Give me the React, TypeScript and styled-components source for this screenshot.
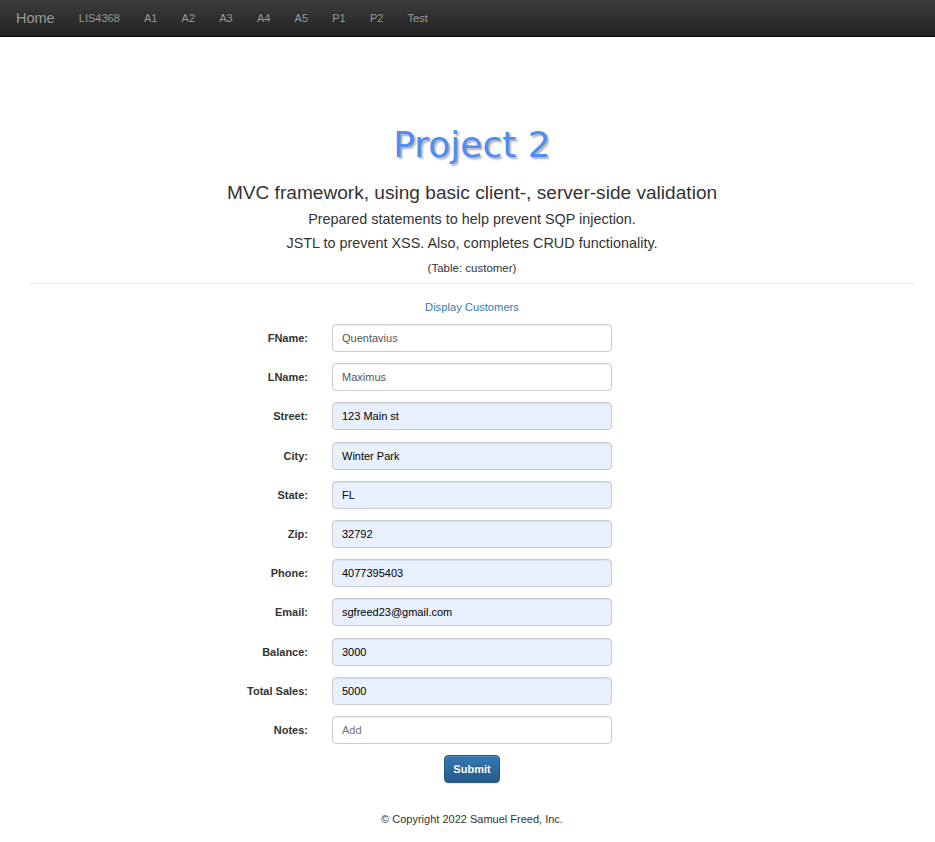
import React from "react";
import styled, { createGlobalStyle } from "styled-components";

const Global = createGlobalStyle`
  html, body { margin: 0; padding: 0; background: #fff; }
  body { font-family: "Liberation Sans", Arial, sans-serif; color: #333; }
  * { box-sizing: border-box; }
`;

const Navbar = styled.nav`
  height: 37px;
  background: linear-gradient(to bottom, #3c3c3c 0%, #222 100%);
  border-bottom: 1px solid #080808;
  display: flex;
  align-items: center;
  padding-left: 16px;
`;

const Brand = styled.a`
  font-size: 14.5px;
  color: #9d9d9d;
  margin-right: 12px;
  text-decoration: none;
  text-shadow: 0 -1px 0 rgba(0, 0, 0, 0.25);
`;

const NavLink = styled.a`
  font-size: 11px;
  color: #9d9d9d;
  padding: 0 12.1px;
  text-decoration: none;
  text-shadow: 0 -1px 0 rgba(0, 0, 0, 0.25);
`;

const Container = styled.main`
  width: 888px;
  margin-left: 28px;
  text-align: center;
`;

const Title = styled.h1`
  margin: 88px 0 0;
  font-family: "DejaVu Sans", Verdana, sans-serif;
  font-weight: normal;
  font-size: 36px;
  line-height: 40px;
  color: #4f8cf6;
  text-shadow: 2px 2px 2px #b0b0b0;
`;

const Lead = styled.h2`
  margin: 17px 0 3px;
  font-size: 19.1px;
  font-weight: normal;
  line-height: 22px;
  color: #333;
`;

const Line = styled.p`
  margin: 0;
  font-size: 14.4px;
  line-height: 24px;
  color: #333;
`;

const Small = styled.p`
  margin: 3px 0 0;
  font-size: 11.5px;
  line-height: 20px;
  color: #333;
`;

const Rule = styled.hr`
  margin: 5px 0 0;
  border: 0;
  border-top: 1px solid #eee;
`;

const LinkLine = styled.a`
  display: block;
  margin-top: 15px;
  font-size: 11.2px;
  line-height: 16px;
  color: #337ab7;
  text-decoration: none;
`;

const Form = styled.form`
  display: grid;
  grid-template-columns: 280px 280px 1fr;
  column-gap: 24px;
  row-gap: 11.2px;
  margin-top: 9px;
  text-align: left;
`;

const Label = styled.label`
  grid-column: 1;
  font-size: 11px;
  font-weight: bold;
  color: #333;
  text-align: right;
  align-self: center;
`;

const Input = styled.input<{ $filled?: boolean }>`
  grid-column: 2;
  height: 28px;
  width: 280px;
  padding: 0 9px;
  border: 1px solid #ccc;
  border-radius: 4px;
  font-family: "Liberation Sans", Arial, sans-serif;
  font-size: 11px;
  color: ${(p) => (p.$filled ? "#000" : "#555")};
  background: ${(p) => (p.$filled ? "#e8f0fe" : "#fff")};
  box-shadow: inset 0 1px 1px rgba(0, 0, 0, 0.075);
  outline: none;
`;

const ButtonRow = styled.div`
  grid-column: 1 / -1;
  display: flex;
  justify-content: center;
`;

const Button = styled.button`
  height: 28px;
  padding: 0 8.5px;
  border: 1px solid #245580;
  border-radius: 4px;
  background: linear-gradient(to bottom, #337ab7 0%, #265a88 100%);
  color: #fff;
  font-family: "Liberation Sans", Arial, sans-serif;
  font-size: 11px;
  font-weight: bold;
  text-shadow: 0 -1px 0 rgba(0, 0, 0, 0.2);
  box-shadow: inset 0 1px 0 rgba(255, 255, 255, 0.15), 0 1px 1px rgba(0, 0, 0, 0.075);
`;

const Footer = styled.footer`
  margin-top: 28px;
  font-size: 11px;
  line-height: 16px;
  color: #333;
  text-align: center;
`;

const fields: { label: string; value: string; filled: boolean }[] = [
  { label: "FName:", value: "Quentavius", filled: false },
  { label: "LName:", value: "Maximus", filled: false },
  { label: "Street:", value: "123 Main st", filled: true },
  { label: "City:", value: "Winter Park", filled: true },
  { label: "State:", value: "FL", filled: true },
  { label: "Zip:", value: "32792", filled: true },
  { label: "Phone:", value: "4077395403", filled: true },
  { label: "Email:", value: "sgfreed23@gmail.com", filled: true },
  { label: "Balance:", value: "3000", filled: true },
  { label: "Total Sales:", value: "5000", filled: true },
];

export default function App() {
  const links = ["LIS4368", "A1", "A2", "A3", "A4", "A5", "P1", "P2", "Test"];
  return (
    <>
      <Global />
      <Navbar>
        <Brand href="#">Home</Brand>
        {links.map((l) => (
          <NavLink key={l} href="#">
            {l}
          </NavLink>
        ))}
      </Navbar>
      <Container>
        <Title>Project 2</Title>
        <Lead>MVC framework, using basic client-, server-side validation</Lead>
        <Line>Prepared statements to help prevent SQP injection.</Line>
        <Line>JSTL to prevent XSS. Also, completes CRUD functionality.</Line>
        <Small>(Table: customer)</Small>
        <Rule />
        <LinkLine href="#">Display Customers</LinkLine>
        <Form onSubmit={(e) => e.preventDefault()}>
          {fields.map((f) => (
            <React.Fragment key={f.label}>
              <Label>{f.label}</Label>
              <Input $filled={f.filled} defaultValue={f.value} />
            </React.Fragment>
          ))}
          <Label>Notes:</Label>
          <Input placeholder="Add" />
          <ButtonRow>
            <Button type="submit">Submit</Button>
          </ButtonRow>
        </Form>
        <Footer>© Copyright 2022 Samuel Freed, Inc.</Footer>
      </Container>
    </>
  );
}
